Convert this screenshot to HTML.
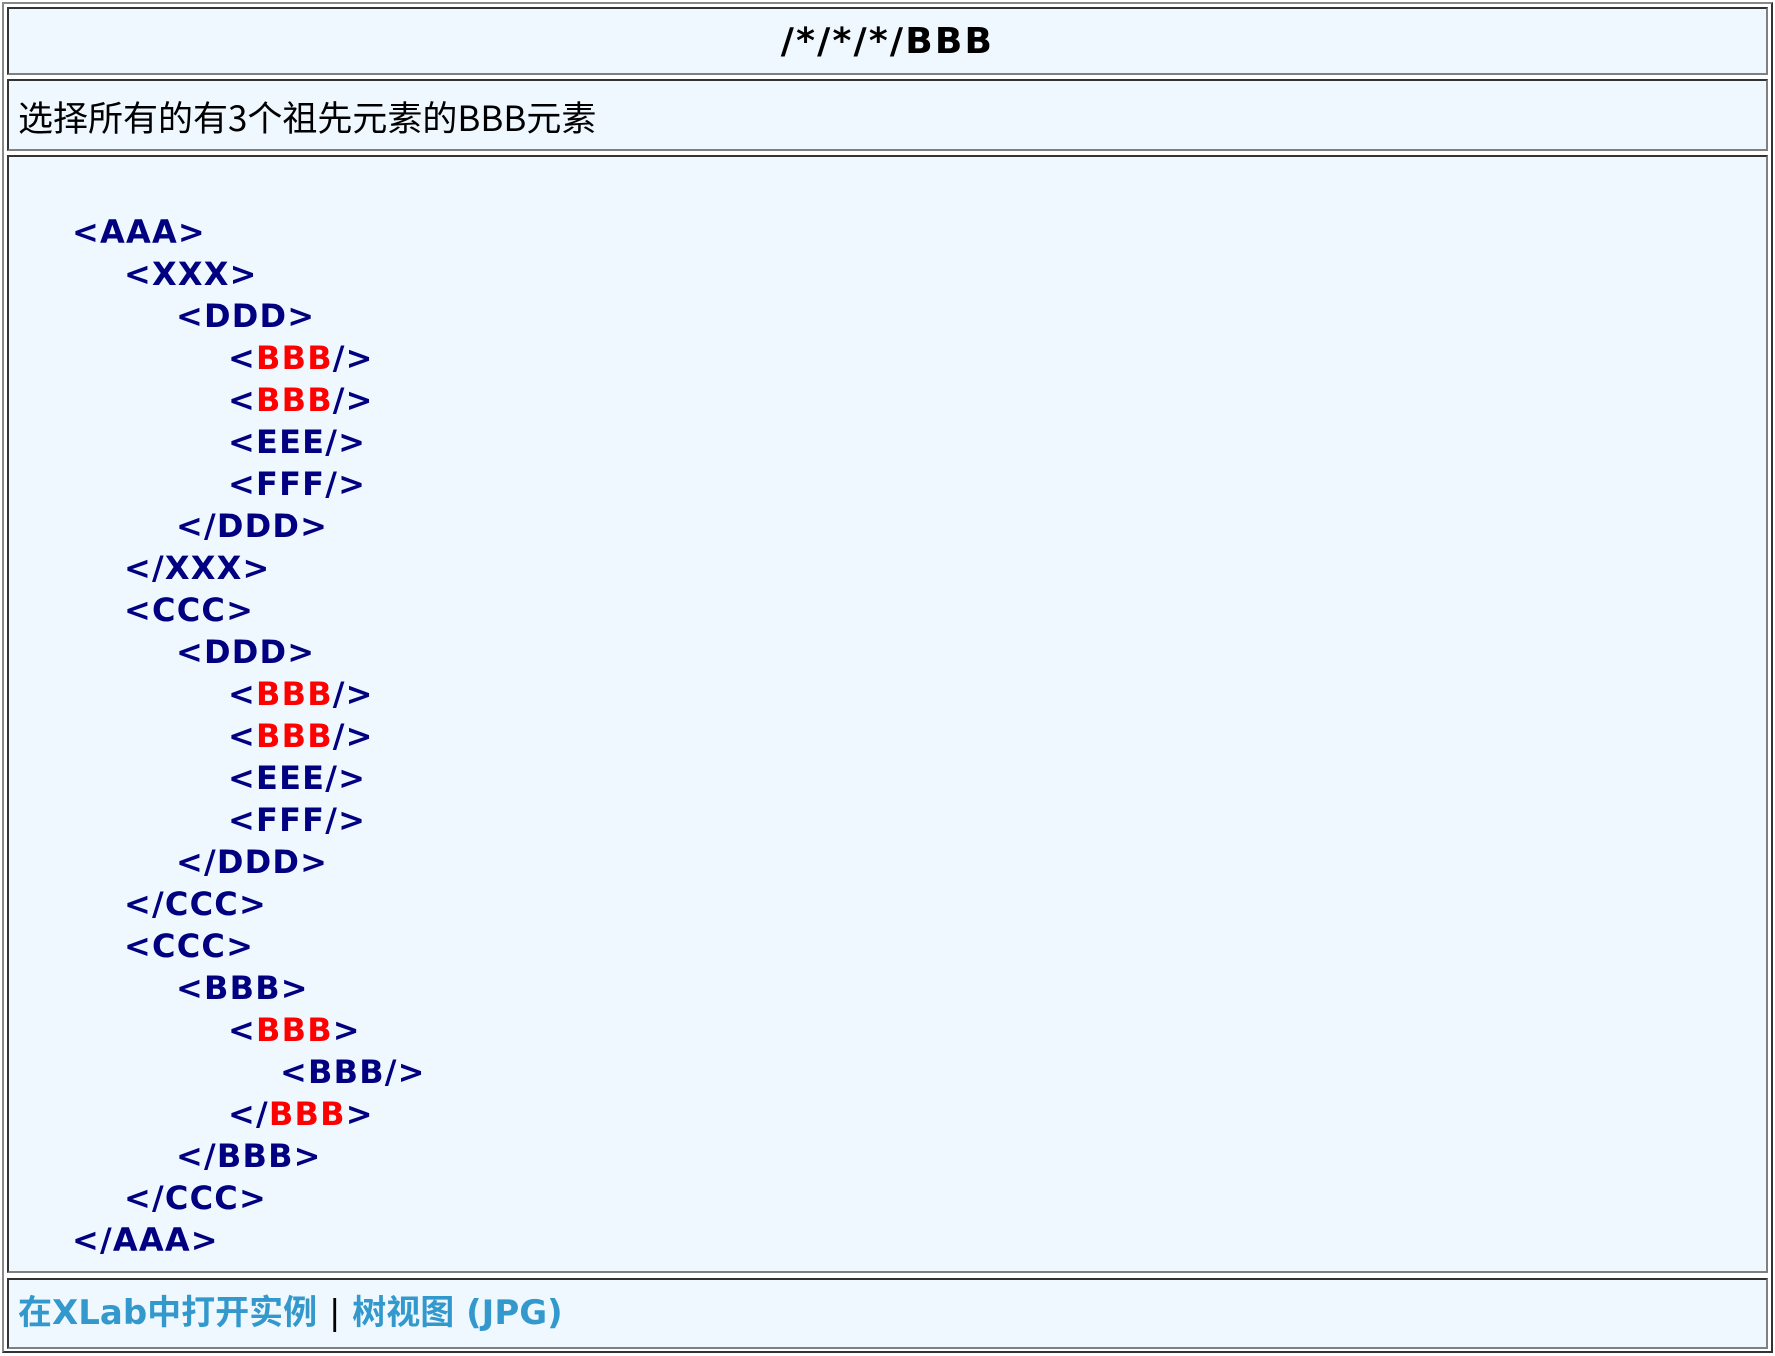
<!DOCTYPE html>
<html><head><meta charset="utf-8"><style>
body{margin:0;width:1775px;height:1356px;background:#fff;position:relative;overflow:hidden;font-family:"DejaVu Sans","Liberation Sans","Noto Sans CJK SC",sans-serif}
.outer{position:absolute;left:2px;top:2px;width:1771px;height:1351px;box-sizing:border-box;border:2px solid;border-color:#888 #333 #333 #888}
.cell{position:absolute;left:7px;width:1761px;box-sizing:border-box;border:2px solid;border-color:#333 #808080 #808080 #333;background:#f0f8ff}
.t{position:absolute;white-space:pre;line-height:44px;height:44px}
.c{position:absolute;white-space:pre;line-height:44px;height:44px;font-weight:bold;font-size:32px;color:#000080;letter-spacing:1.2px;font-family:"DejaVu Sans",sans-serif}
.r{color:#ff0000}
</style></head><body>
<div class="outer"></div>
<div class="cell" style="top:7px;height:68px"></div>
<div class="cell" style="top:79px;height:72px"></div>
<div class="cell" style="top:155px;height:1118px"></div>
<div class="cell" style="top:1278px;height:71px"></div>
<div class="t" style="left:0;width:1775px;text-align:center;top:20px;font-weight:bold;font-size:36px;letter-spacing:2.2px;color:#000;font-family:'DejaVu Sans',sans-serif">/*/*/*/BBB</div>
<div class="t" style="left:18px;top:95px;font-size:35px;color:#000;font-family:'Noto Sans CJK SC',sans-serif">选择所有的有3个祖先元素的BBB元素</div>

<div class="c" style="left:72px;top:210px">&lt;AAA&gt;</div>
<div class="c" style="left:124px;top:252px">&lt;XXX&gt;</div>
<div class="c" style="left:176px;top:294px">&lt;DDD&gt;</div>
<div class="c" style="left:228px;top:336px">&lt;<span class="r">BBB</span>/&gt;</div>
<div class="c" style="left:228px;top:378px">&lt;<span class="r">BBB</span>/&gt;</div>
<div class="c" style="left:228px;top:420px">&lt;EEE/&gt;</div>
<div class="c" style="left:228px;top:462px">&lt;FFF/&gt;</div>
<div class="c" style="left:176px;top:504px">&lt;/DDD&gt;</div>
<div class="c" style="left:124px;top:546px">&lt;/XXX&gt;</div>
<div class="c" style="left:124px;top:588px">&lt;CCC&gt;</div>
<div class="c" style="left:176px;top:630px">&lt;DDD&gt;</div>
<div class="c" style="left:228px;top:672px">&lt;<span class="r">BBB</span>/&gt;</div>
<div class="c" style="left:228px;top:714px">&lt;<span class="r">BBB</span>/&gt;</div>
<div class="c" style="left:228px;top:756px">&lt;EEE/&gt;</div>
<div class="c" style="left:228px;top:798px">&lt;FFF/&gt;</div>
<div class="c" style="left:176px;top:840px">&lt;/DDD&gt;</div>
<div class="c" style="left:124px;top:882px">&lt;/CCC&gt;</div>
<div class="c" style="left:124px;top:924px">&lt;CCC&gt;</div>
<div class="c" style="left:176px;top:966px">&lt;BBB&gt;</div>
<div class="c" style="left:228px;top:1008px">&lt;<span class="r">BBB</span>&gt;</div>
<div class="c" style="left:280px;top:1050px">&lt;BBB/&gt;</div>
<div class="c" style="left:228px;top:1092px">&lt;/<span class="r">BBB</span>&gt;</div>
<div class="c" style="left:176px;top:1134px">&lt;/BBB&gt;</div>
<div class="c" style="left:124px;top:1176px">&lt;/CCC&gt;</div>
<div class="c" style="left:72px;top:1218px">&lt;/AAA&gt;</div>

<div class="t" style="left:18px;top:1291px;font-size:34px;font-weight:bold;color:#3399cc;font-family:'DejaVu Sans','Noto Sans CJK SC',sans-serif">在XLab中打开实例 <span style="color:#000;font-weight:normal">|</span> 树视图 (JPG)</div>
</body></html>
